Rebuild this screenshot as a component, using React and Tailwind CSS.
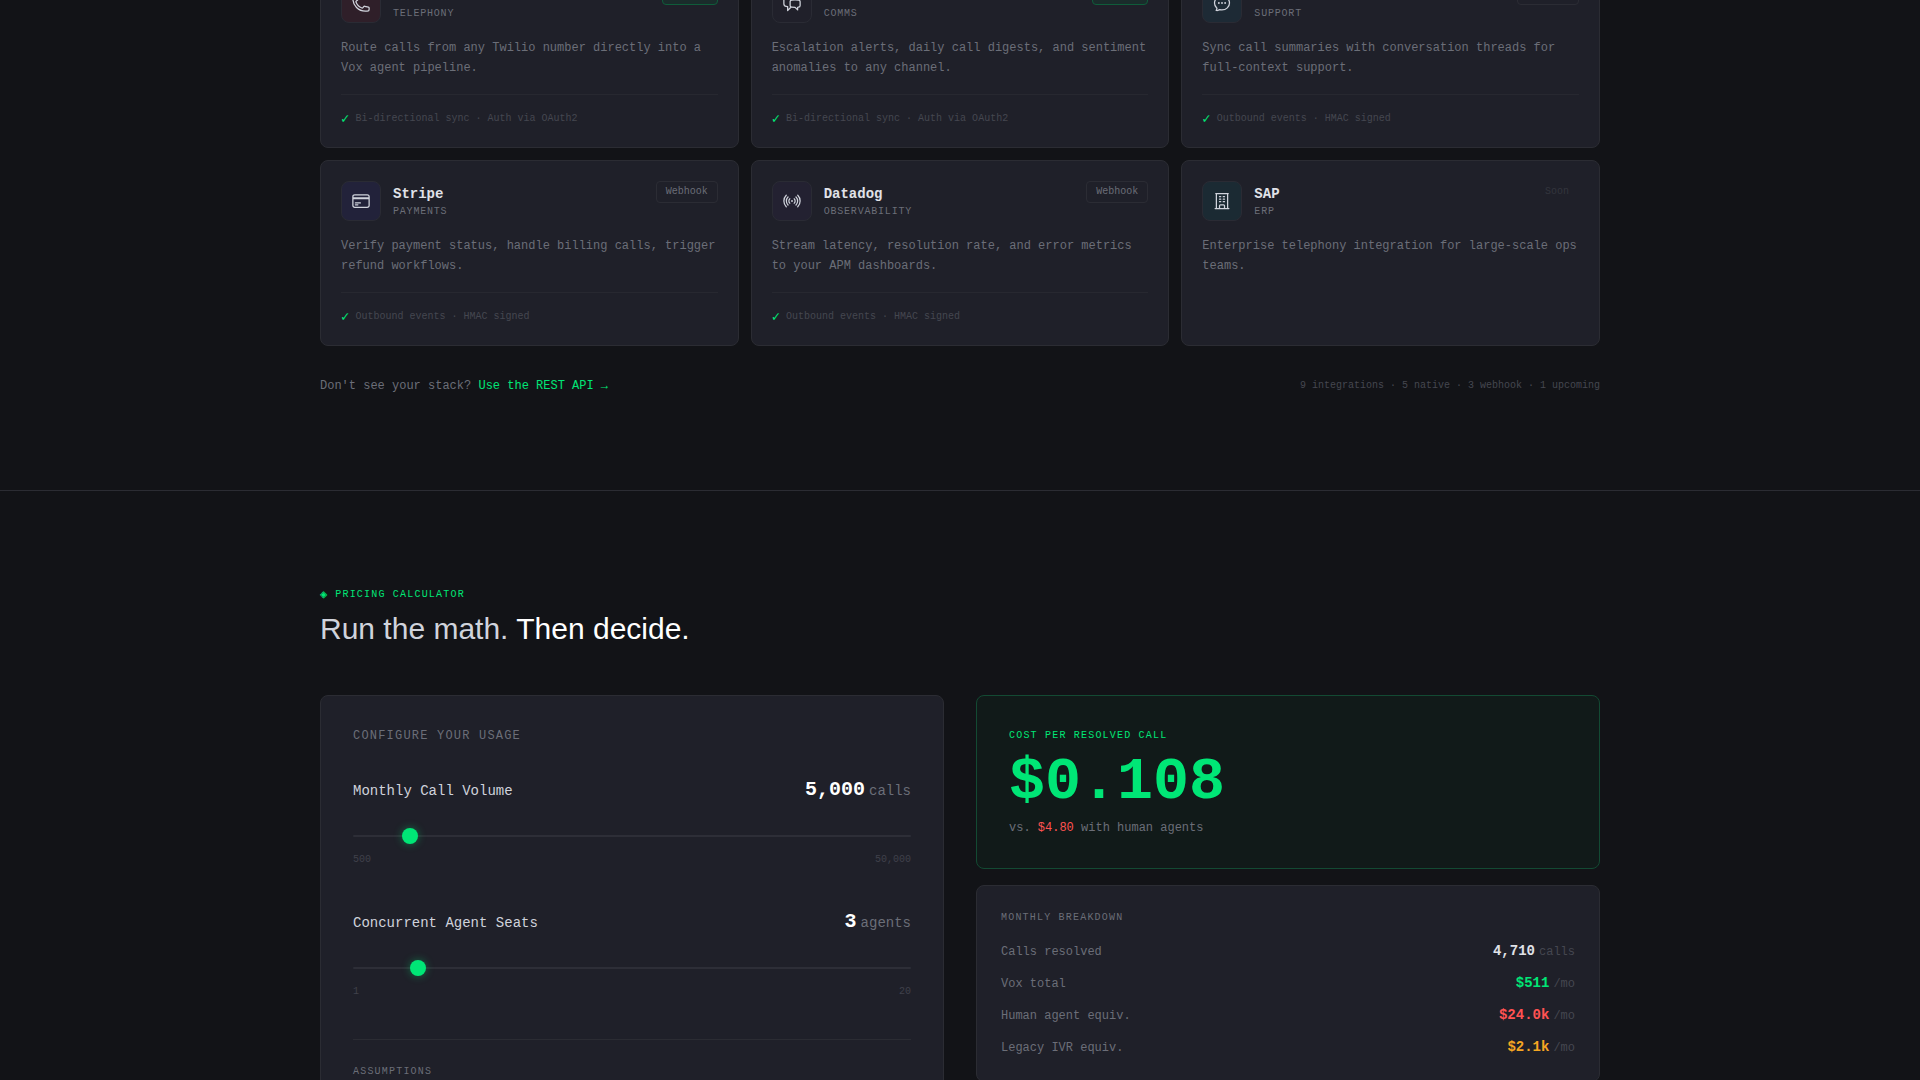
import React, { useState } from 'react';
import clsx from 'clsx';
import {
  HiOutlineBuildingOffice,
  HiOutlineChatBubbleLeftRight,
  HiOutlineChatBubbleOvalLeftEllipsis,
  HiOutlineCreditCard,
  HiOutlinePhone,
  HiOutlineSignal,
} from 'react-icons/hi2';

const integrations = [
  {
    name: 'Twilio',
    category: 'Telephony',
    status: 'Native',
    icon: HiOutlinePhone,
    tile: 'bg-[#2f1f29]',
    description: 'Route calls from any Twilio number directly into a Vox agent pipeline.',
  },
  {
    name: 'Slack',
    category: 'Comms',
    status: 'Native',
    icon: HiOutlineChatBubbleLeftRight,
    tile: 'bg-[#20202a]',
    description: 'Escalation alerts, daily call digests, and sentiment anomalies to any channel.',
  },
  {
    name: 'Intercom',
    category: 'Support',
    status: 'Webhook',
    icon: HiOutlineChatBubbleOvalLeftEllipsis,
    tile: 'bg-[#1d2a35]',
    description: 'Sync call summaries with conversation threads for full-context support.',
  },
  {
    name: 'Stripe',
    category: 'Payments',
    status: 'Webhook',
    icon: HiOutlineCreditCard,
    tile: 'bg-[#22223a]',
    description: 'Verify payment status, handle billing calls, trigger refund workflows.',
  },
  {
    name: 'Datadog',
    category: 'Observability',
    status: 'Webhook',
    icon: HiOutlineSignal,
    tile: 'bg-[#232131]',
    description: 'Stream latency, resolution rate, and error metrics to your APM dashboards.',
  },
  {
    name: 'SAP',
    category: 'ERP',
    status: 'Soon',
    icon: HiOutlineBuildingOffice,
    tile: 'bg-[#1b2a33]',
    description: 'Enterprise telephony integration for large-scale ops teams.',
  },
];

const badgeStyles = {
  Native: 'border-[#0f5c3a] bg-[#1a2c2b] text-[#00e676]',
  Webhook: 'border-[#2b2c34] text-[#6b6e78]',
  Soon: 'border-transparent text-[#33353d]',
};

const footnotes = {
  Native: 'Bi-directional sync · Auth via OAuth2',
  Webhook: 'Outbound events · HMAC signed',
};

const IntegrationCard = ({ item }) => {
  const Icon = item.icon;

  return (
    <article className="flex flex-col rounded-lg border border-[#2b2c33] bg-[#1f2029] p-5">
      <div className="flex items-start justify-between">
        <div className="flex items-center gap-3">
          <div className={clsx('flex size-10 items-center justify-center rounded-lg border border-[#2a2b34]', item.tile)}>
            <Icon className="size-5 text-[#d0d3dc]" />
          </div>
          <div className="pt-0.5">
            <h3 className="text-sm font-bold text-[#e0e2e8]">{item.name}</h3>
            <p className="text-[10px] leading-4 tracking-[0.08em] text-[#6b6e78] uppercase">{item.category}</p>
          </div>
        </div>
        <span className={clsx('rounded-sm border px-[9px] py-0.5 text-[10px] leading-4', badgeStyles[item.status])}>
          {item.status}
        </span>
      </div>
      <p className="mt-[15px] text-xs leading-5 text-[#6b6e78]">{item.description}</p>
      {footnotes[item.status] && (
        <div className="mt-4 flex items-center gap-1.5 border-t border-[#272830] pt-4 text-[10px] leading-4 text-[#454750]">
          <span className="text-sm leading-4 text-[#00e676]">✓</span>
          {footnotes[item.status]}
        </div>
      )}
    </article>
  );
};

const UsageSlider = ({ id, label, unit, min, max, step, value, onChange }) => (
  <div>
    <div className="flex items-baseline justify-between">
      <label htmlFor={id} className="text-sm text-[#d0d3dc]">{label}</label>
      <div className="flex items-baseline gap-1">
        <span className="text-xl font-bold text-white">{value.toLocaleString('en-US')}</span>
        <span className="text-sm text-[#6b6e78]">{unit}</span>
      </div>
    </div>
    <input
      id={id}
      type="range"
      min={min}
      max={max}
      step={step}
      value={value}
      onChange={(e) => onChange(Number(e.target.value))}
      className="mt-6 block h-4 w-full cursor-pointer appearance-none bg-transparent [&::-webkit-slider-runnable-track]:h-0.5 [&::-webkit-slider-runnable-track]:rounded-full [&::-webkit-slider-runnable-track]:bg-[#2d2e37] [&::-webkit-slider-thumb]:-mt-[7px] [&::-webkit-slider-thumb]:size-4 [&::-webkit-slider-thumb]:appearance-none [&::-webkit-slider-thumb]:rounded-full [&::-webkit-slider-thumb]:bg-[#00e676] [&::-webkit-slider-thumb]:shadow-[0_0_8px_rgba(0,230,118,0.4)]"
    />
    <div className="mt-2 flex justify-between text-[10px] leading-4 text-[#3f414b]">
      <span>{min.toLocaleString('en-US')}</span>
      <span>{max.toLocaleString('en-US')}</span>
    </div>
  </div>
);

const money = (value) => (value >= 1000 ? `$${(value / 1000).toFixed(1)}k` : `$${Math.round(value)}`);

const App = () => {
  const [calls, setCalls] = useState(5000);
  const [seats, setSeats] = useState(3);

  const resolved = Math.round(calls * 0.942);
  const voxTotal = seats * 37 + calls * 0.08;

  const breakdown = [
    { label: 'Calls resolved', value: resolved.toLocaleString('en-US'), unit: 'calls', color: 'text-[#e0e2e8]' },
    { label: 'Vox total', value: money(voxTotal), unit: '/mo', color: 'text-[#00e676]' },
    { label: 'Human agent equiv.', value: money(calls * 4.8), unit: '/mo', color: 'text-[#ff5252]' },
    { label: 'Legacy IVR equiv.', value: money(calls * 0.42), unit: '/mo', color: 'text-[#f5a623]' },
  ];

  return (
    <div className="h-screen overflow-hidden bg-[#121317] font-['Liberation_Mono',monospace] text-[#6b6e78]">
      {/* Integrations */}
      <section className="-mt-[38px] pb-24">
        <div className="mx-auto max-w-[1280px]">
          <div className="grid grid-cols-3 gap-3">
            {integrations.map((item) => (
              <IntegrationCard key={item.name} item={item} />
            ))}
          </div>
          <div className="mt-8 flex items-center justify-between">
            <p className="text-xs leading-4">
              Don't see your stack? <a href="#api" className="text-[#00e676]">Use the REST API →</a>
            </p>
            <p className="text-[10px] leading-4 text-[#454750]">
              9 integrations · 5 native · 3 webhook · 1 upcoming
            </p>
          </div>
        </div>
      </section>

      {/* Pricing */}
      <section className="border-t border-[#2b2c33] py-24">
        <div className="mx-auto max-w-[1280px]">
          <p className="flex items-center gap-2 text-[10px] leading-4 tracking-[0.12em] text-[#00e676] uppercase">
            <span className="text-xs leading-4 tracking-normal">◈</span>
            Pricing Calculator
          </p>
          <h2 className="mt-2 font-['Liberation_Sans',sans-serif] text-3xl text-[#d0d3dc]">
            Run the math. <span className="text-white">Then decide.</span>
          </h2>

          <div className="mt-12 grid grid-cols-2 gap-8">
            <div className="rounded-lg border border-[#2b2c33] bg-[#1f2029] p-8">
              <h3 className="text-xs tracking-widest uppercase">Configure your usage</h3>
              <div className="mt-8 space-y-10">
                <UsageSlider
                  id="volume"
                  label="Monthly Call Volume"
                  unit="calls"
                  min={500}
                  max={50000}
                  step={500}
                  value={calls}
                  onChange={setCalls}
                />
                <UsageSlider
                  id="seats"
                  label="Concurrent Agent Seats"
                  unit="agents"
                  min={1}
                  max={20}
                  step={1}
                  value={seats}
                  onChange={setSeats}
                />
              </div>
              <div className="mt-[39px] border-t border-[#2b2c33] pt-6">
                <h4 className="text-[10px] leading-4 tracking-[0.12em] uppercase">Assumptions</h4>
              </div>
            </div>

            <div className="flex flex-col gap-4">
              <div className="rounded-lg border border-[#134a33] bg-[#111a19] p-8">
                <h3 className="text-[10px] leading-4 tracking-[0.12em] text-[#00e676] uppercase">Cost per resolved call</h3>
                <p className="mt-2 text-6xl leading-none font-bold text-[#00e676]">
                  ${(voxTotal / resolved).toFixed(3)}
                </p>
                <p className="mt-2 text-xs">
                  vs. <span className="text-[#ff5252]">$4.80</span> with human agents
                </p>
              </div>

              <div className="rounded-lg border border-[#2b2c33] bg-[#1f2029] p-6">
                <h3 className="text-[10px] leading-4 tracking-[0.12em] uppercase">Monthly breakdown</h3>
                <dl className="mt-[15px] space-y-3">
                  {breakdown.map((row) => (
                    <div key={row.label} className="flex items-baseline justify-between">
                      <dt className="text-xs">{row.label}</dt>
                      <dd className="flex items-baseline gap-1">
                        <span className={clsx('text-sm font-bold', row.color)}>{row.value}</span>
                        <span className="text-xs text-[#454750]">{row.unit}</span>
                      </dd>
                    </div>
                  ))}
                </dl>
              </div>
            </div>
          </div>
        </div>
      </section>
    </div>
  );
};

export default App;
